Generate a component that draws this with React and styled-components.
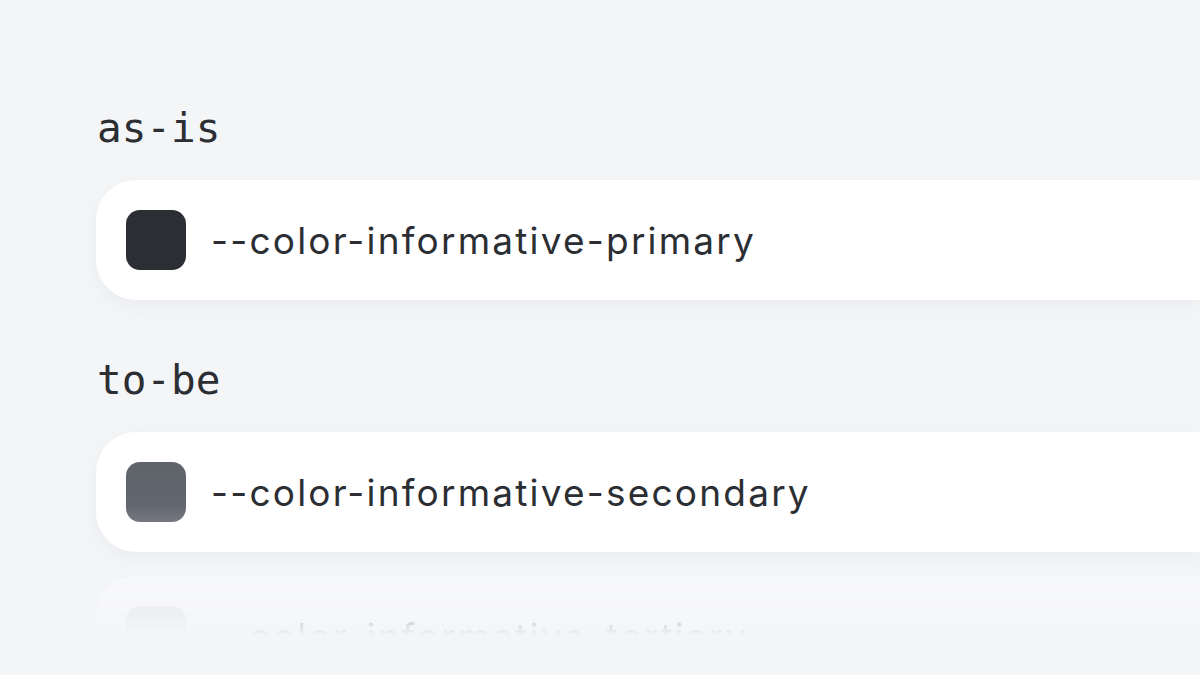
import React from 'react'
import styled, { createGlobalStyle } from 'styled-components'

const Global = createGlobalStyle`
  html, body {
    margin: 0;
    background: #f4f5f7;
    overflow: hidden;
  }
`

const Page = styled.main`
  height: 675px;
  padding: 104px 0 0 96px;
  box-sizing: border-box;
  display: flex;
  flex-direction: column;
`

const Group = styled.section`
  display: flex;
  flex-direction: column;
  gap: 28px;
  margin-bottom: ${p => p.$last ? '24px' : '56px'};
`

const Label = styled.h2`
  margin: 0 0 0 1px;
  font-family: "DejaVu Sans Mono", "Liberation Mono", monospace;
  font-weight: 400;
  font-size: 41px;
  line-height: 48px;
  color: #2b2e33;
`

const Token = styled.div`
  width: 1104px;
  height: 120px;
  box-sizing: border-box;
  padding-left: 30px;
  display: flex;
  align-items: center;
  gap: 25px;
  background: #fff;
  border-radius: 40px 0 0 40px;
  box-shadow: 0 6px 20px rgba(30, 35, 45, 0.04);
`

const Swatch = styled.span`
  flex: none;
  width: 60px;
  height: 60px;
  border-radius: 14px;
  background: ${p => p.$color};
`

const Name = styled.span`
  font-family: Inter, "Noto Sans", sans-serif;
  font-size: 37px;
  color: #2b2e33;
  letter-spacing: 2.2px;
`

// the next token trails off below the fold
const Fade = styled.div`
  opacity: 0.35;
  -webkit-mask-image: linear-gradient(to bottom, #000 0, rgba(0,0,0,0.6) 40px, transparent 60px);
  mask-image: linear-gradient(to bottom, #000 0, rgba(0,0,0,0.6) 40px, transparent 60px);
`

const tokens = [
  { label: 'as-is', name: '--color-informative-primary', color: '#2b2e33' },
  { label: 'to-be', name: '--color-informative-secondary', color: 'linear-gradient(to bottom, #5f646b 0%, #62666e 70%, #75787f 100%)' },
]

export default function App() {
  return (
    <>
      <Global />
      <Page>
        {tokens.map((t, i) => (
          <Group key={t.label} $last={i === tokens.length - 1}>
            <Label>{t.label}</Label>
            <Token>
              <Swatch $color={t.color} />
              <Name>{t.name}</Name>
            </Token>
          </Group>
        ))}
        <Fade>
          <Token>
            <Swatch $color="linear-gradient(to bottom, #d8dadd, #eceef0)" />
            <Name>--color-informative-tertiary</Name>
          </Token>
        </Fade>
      </Page>
    </>
  )
}
